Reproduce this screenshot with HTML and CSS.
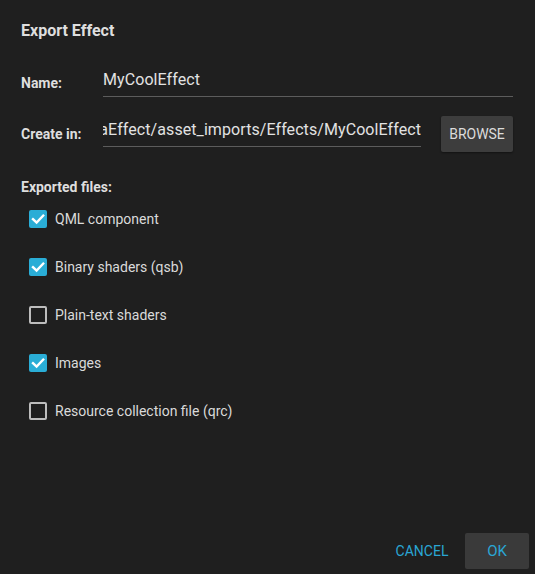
FILE: index.html
```html
<!DOCTYPE html>
<html>
<head>
<meta charset="utf-8">
<link rel="stylesheet" href="styles.css">
</head>
<body>
<div class="dialog">
  <div class="title">Export Effect</div>
  <div class="form">
    <div class="label">Name:</div>
    <div class="field field-wide"><span class="field-text">MyCoolEffect</span></div>
    <div class="label label-create">Create in:</div>
    <div class="field field-path"><span class="field-text">/home/user/projects/MyShaderMediaEffect/asset_imports/Effects/MyCoolEffect</span></div>
    <button class="btn browse">BROWSE</button>
  </div>
  <div class="section">Exported files:</div>
  <ul class="checks">
    <li class="check"><span class="box on"><svg viewBox="0 0 18 18" width="18" height="18"><path d="M4 9.2 L7.6 12.6 L14.2 5.6" fill="none" stroke="#fff" stroke-width="2.4" stroke-linecap="square"/></svg></span><span class="check-label">QML component</span></li>
    <li class="check"><span class="box on"><svg viewBox="0 0 18 18" width="18" height="18"><path d="M4 9.2 L7.6 12.6 L14.2 5.6" fill="none" stroke="#fff" stroke-width="2.4" stroke-linecap="square"/></svg></span><span class="check-label">Binary shaders (qsb)</span></li>
    <li class="check"><span class="box off"></span><span class="check-label">Plain-text shaders</span></li>
    <li class="check"><span class="box on"><svg viewBox="0 0 18 18" width="18" height="18"><path d="M4 9.2 L7.6 12.6 L14.2 5.6" fill="none" stroke="#fff" stroke-width="2.4" stroke-linecap="square"/></svg></span><span class="check-label">Images</span></li>
    <li class="check"><span class="box off"></span><span class="check-label">Resource collection file (qrc)</span></li>
  </ul>
  <div class="footer">
    <button class="btn flat">CANCEL</button>
    <button class="btn ok">OK</button>
  </div>
</div>
</body>
</html>
```

FILE: styles.css
```css
html, body {
  margin: 0;
  padding: 0;
  background: #1f1f1f;
}
body {
  width: 535px;
  height: 574px;
  overflow: hidden;
  font-family: Roboto, "Liberation Sans", sans-serif;
  color: #dedede;
}
.dialog {
  position: relative;
  height: 574px;
  padding: 21px 22px 0 21px;
  box-sizing: border-box;
}
.title {
  font-size: 16px;
  font-weight: bold;
  line-height: 20px;
  height: 20px;
}
.form {
  margin-top: 19px;
  display: grid;
  grid-template-columns: 82px 318px 20px 72px;
  row-gap: 13px;
}
.label {
  font-size: 14px;
  font-weight: bold;
  line-height: 20px;
  margin-top: 13px;
  grid-column: 1;
}
.label-create {
  margin-top: 14px;
}
.field {
  border-bottom: 1px solid #5c5c5c;
  font-size: 16px;
  line-height: 20px;
  padding-top: 10px;
  height: 26px;
  overflow: hidden;
  white-space: nowrap;
  color: #e2e2e2;
}
.field-wide {
  grid-column: 2 / 5;
}
.field-path {
  grid-column: 2;
  display: flex;
  justify-content: flex-end;
}
.field-text {
  flex: none;
  letter-spacing: 0.08px;
}
.btn {
  font-family: Roboto, "Liberation Sans", sans-serif;
  font-size: 14px;
  line-height: 16px;
  border: none;
  border-radius: 2px;
  padding: 0;
  cursor: pointer;
}
.browse {
  grid-column: 4;
  margin-top: 6px;
  height: 36px;
  width: 72px;
  background: #3d3d3d;
  color: #dcdcdc;
  box-shadow: 0 1px 2px rgba(0,0,0,0.4);
}
.section {
  margin-top: 27px;
  font-size: 14px;
  font-weight: bold;
  line-height: 16px;
}
.checks {
  list-style: none;
  margin: 0;
  padding: 0 0 0 8px;
}
.check {
  height: 48px;
  display: flex;
  align-items: center;
  gap: 8px;
}
.box {
  width: 18px;
  height: 18px;
  border-radius: 2px;
  box-sizing: border-box;
  flex: none;
  display: block;
}
.box svg {
  display: block;
}
.box.on {
  background: #2aadd6;
}
.box.off {
  border: 2px solid #bdbdbd;
}
.check-label {
  font-size: 14px;
  line-height: 16px;
  color: #dadada;
}
.footer {
  position: absolute;
  right: 6px;
  bottom: 5px;
  display: flex;
  align-items: center;
  gap: 13px;
}
.flat {
  background: transparent;
  color: #2aa6d4;
  height: 36px;
  width: 60px;
}
.ok {
  background: #3a3a3a;
  color: #2aa6d4;
  height: 36px;
  width: 64px;
  font-size: 15px;
}
```
